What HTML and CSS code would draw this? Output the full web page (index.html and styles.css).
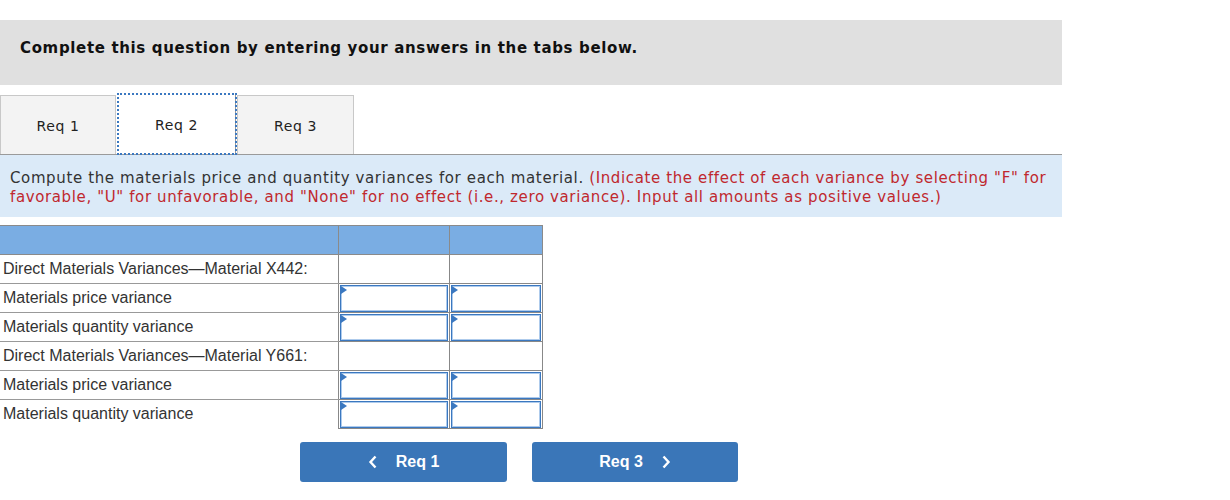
FILE: index.html
```html
<!DOCTYPE html>
<html>
<head>
<meta charset="utf-8">
<link rel="stylesheet" href="styles.css">
</head>
<body>
<div class="page">
  <div class="banner">Complete this question by entering your answers in the tabs below.</div>
  <div class="tabs">
    <div class="tab">Req 1</div>
    <div class="tab active">Req 2</div>
    <div class="tab">Req 3</div>
  </div>
  <div class="instructions">Compute the materials price and quantity variances for each material. <span class="red">(Indicate the effect of each variance by selecting "F" for favorable, "U" for unfavorable, and "None" for no effect (i.e., zero variance). Input all amounts as positive values.)</span></div>
  <table class="grid">
    <tr class="head"><td class="c1"></td><td class="c2"></td><td class="c3"></td></tr>
    <tr><td class="c1">Direct Materials Variances—Material X442:</td><td></td><td></td></tr>
    <tr><td class="c1">Materials price variance</td><td class="in"><div class="box"></div></td><td class="in"><div class="box"></div></td></tr>
    <tr><td class="c1">Materials quantity variance</td><td class="in"><div class="box"></div></td><td class="in"><div class="box"></div></td></tr>
    <tr><td class="c1">Direct Materials Variances—Material Y661:</td><td></td><td></td></tr>
    <tr><td class="c1">Materials price variance</td><td class="in"><div class="box"></div></td><td class="in"><div class="box"></div></td></tr>
    <tr class="last"><td class="c1">Materials quantity variance</td><td class="in"><div class="box"></div></td><td class="in"><div class="box"></div></td></tr>
  </table>
  <div class="nav">
    <div class="btn"><svg class="chev" width="10" height="14" viewBox="0 0 10 14"><path d="M7.5 1.5 L2.5 7 L7.5 12.5" fill="none" stroke="#fff" stroke-width="2.4"/></svg><span>Req 1</span></div>
    <div class="btn"><span>Req 3</span><svg class="chev" width="10" height="14" viewBox="0 0 10 14"><path d="M2.5 1.5 L7.5 7 L2.5 12.5" fill="none" stroke="#fff" stroke-width="2.4"/></svg></div>
  </div>
</div>
</body>
</html>
```
FILE: styles.css
```css
html, body { margin: 0; padding: 0; background: #fff; }
.page { padding-top: 20px; width: 1062px; }
.banner {
  background: #e0e0e0;
  height: 65px;
  box-sizing: border-box;
  padding: 18px 0 0 20px;
  font-family: Verdana, "DejaVu Sans", sans-serif;
  font-weight: bold;
  font-size: 15px;
  letter-spacing: 0.65px;
  color: #111;
  line-height: 20px;
}
.tabs {
  display: flex;
  margin-top: 10px;
  height: 59px;
  border-bottom: 1px solid #9a9a9a;
}
.tab {
  box-sizing: border-box;
  width: 117px;
  height: 59px;
  padding-top: 2px;
  background: #f3f3f3;
  border: 1px solid #c8c8c8;
  border-bottom: none;
  display: flex;
  align-items: center;
  justify-content: center;
  font-family: Verdana, "DejaVu Sans", sans-serif;
  font-size: 14px;
  letter-spacing: 0.6px;
  color: #222;
  margin-right: 1px;
}
.tab:first-child { width: 116px; }
.tab.active {
  background: #fff;
  width: 118px;
  height: 60px;
  margin-top: -1px;
  border: none;
  border-right: 1px solid #999;
  outline: 2px dotted #3b78c0;
  outline-offset: -1px;
  position: relative;
  z-index: 1;
  margin-left: 1px;
  margin-right: 1px;
}
.instructions {
  background: #dbeaf8;
  padding: 14px 10px 8px 10px;
  font-family: Verdana, "DejaVu Sans", sans-serif;
  font-size: 15px;
  letter-spacing: 0.62px;
  line-height: 19px;
  color: #333;
  min-height: 40px;
}
.red { color: #c0282e; }
.grid {
  margin-top: 8px;
  border-collapse: collapse;
  font-family: Arial, "Liberation Sans", sans-serif;
  font-size: 16px;
  color: #333;
}
.grid td {
  border: 1px solid #888;
  height: 28px;
  padding: 0;
}
.grid td.c1 { width: 335px; padding-left: 3px; border-left: none; white-space: nowrap; }
.grid tr.head td { background: #7aade3; border-color: #8a8a8a; }
.grid td.c2 { width: 110px; }
.grid td.c3 { width: 92px; }
.grid tr:not(.head) td.c1 { border-bottom: 1px solid #999; }
.grid tr.last td.c1 { border-bottom: none; }
.grid td.in { padding: 0 1px; vertical-align: middle; }
.box {
  position: relative;
  border: 1px solid #3b78c0;
  box-shadow: inset 0 0 0 1px #aecbec;
  background: #fff;
  box-sizing: border-box;
  height: 27px;
}
.box::before {
  content: "";
  position: absolute;
  left: 0; top: 0;
  border-left: 6px solid #3b78c0;
  border-top: 4px solid transparent;
  border-bottom: 4px solid transparent;
}
.nav {
  display: flex;
  margin-top: 13px;
  margin-left: 300px;
  gap: 25px;
}
.btn {
  width: 207px;
  height: 40px;
  background: #3a76b8;
  border-radius: 3px;
  display: flex;
  align-items: center;
  justify-content: center;
  gap: 18px;
  color: #fff;
  font-family: Arial, "Liberation Sans", sans-serif;
  font-weight: bold;
  font-size: 16px;
}
.btn + .btn { width: 206px; }
.chev { display: block; }
```
